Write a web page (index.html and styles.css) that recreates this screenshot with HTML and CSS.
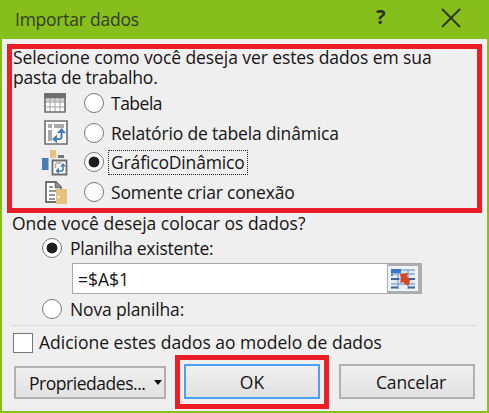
FILE: index.html
```html
<!DOCTYPE html>
<html lang="pt">
<head>
<meta charset="utf-8">
<title>Importar dados</title>
<link rel="stylesheet" href="styles.css">
</head>
<body>
<div class="dialog">
  <header class="titlebar">
    <span class="title">Importar dados</span>
    <span class="help">?</span>
    <svg class="close" width="20" height="20" viewBox="0 0 20 20"><path d="M1 1L19 19M19 1L1 19" stroke="#30381f" stroke-width="2" fill="none"/></svg>
  </header>
  <main class="body">
    <section class="view-options">
      <p class="intro"><span class="t-intro1">Selecione como você deseja ver estes dados em sua</span><span class="t-intro2">pasta de trabalho.</span></p>
      <div class="option">
        <svg class="icon" width="28" height="28" viewBox="0 0 28 28"><path d="M4 5h20v18H4z" fill="#fff"/><path d="M4 9h20v4H4z" fill="#d2d2d2"/><path d="M9 9v14M14 9v14M19 9v14M4 13h20M4 18h20" stroke="#a2a2a2" fill="none"/><path d="M4 5h20v18H4z" fill="none" stroke="#6d6d6d" stroke-width="1.6"/><path d="M3.2 4.2h21.6v5H3.2z" fill="#6d6d6d"/></svg>
        <span class="radio"></span><span class="label t-tabela">Tabela</span>
      </div>
      <div class="option">
        <svg class="icon" width="28" height="28" viewBox="0 0 28 28"><path d="M4 2h22v23H4z" fill="#fff" stroke="#6d6d6d" stroke-width="1.6"/><path d="M7 5h4v4H7zM13 5h10v4H13zM7 11h4v11H7z" fill="#a9a9a9"/><path d="M20.500 12v6q0 2-2 2H14" fill="none" stroke="#477eb8" stroke-width="2"/><path d="M16 14l4.500-5 4.500 5zM16 15.500v9L11 20z" fill="#477eb8"/></svg>
        <span class="radio"></span><span class="label t-relatorio">Relatório de tabela dinâmica</span>
      </div>
      <div class="option">
        <svg class="icon" width="28" height="28" viewBox="0 0 28 28"><path d="M9 2h6v8H9z" fill="#e9c17e"/><path d="M1 10h6.500v12H1z" fill="#477eb8"/><path d="M17 7h6v3h-6z" fill="#777"/><path d="M11.500 12.500h14v14h-14z" fill="#fff" stroke="#6d6d6d" stroke-width="1.800"/><path d="M14.500 20v-4l1-1h5" fill="none" stroke="#aaa" stroke-width="1.500"/><path d="M22 17v5l-1 1h-4" fill="none" stroke="#477eb8" stroke-width="1.600"/><path d="M19 18.500l3-3.500 3 3.500zM18 19.500v6.500l-3.500-3z" fill="#477eb8"/></svg>
        <span class="radio on"></span><span class="label focus t-grafico">GráficoDinâmico</span>
      </div>
      <div class="option">
        <svg class="icon" width="28" height="28" viewBox="0 0 28 28"><path d="M5 4h10l5 5v15H5z" fill="#fff" stroke="#6d6d6d" stroke-width="1.800"/><path d="M14.500 4v5.500H20" fill="#999" stroke="#6d6d6d" stroke-width="1.500"/><path d="M8 9h4M8 13h8M8 17h6M8 21h6" stroke="#777" stroke-width="1.600"/><path d="M15 11h11v15H15z" fill="#e9c17e"/><path d="M16.500 18h2v2h-2z" fill="#fff"/></svg>
        <span class="radio"></span><span class="label t-somente">Somente criar conexão</span>
      </div>
    </section>
    <section class="place">
      <p class="question"><span class="t-onde">Onde você deseja colocar os dados?</span></p>
      <div class="place-option"><span class="radio on"></span><span class="label t-planilha">Planilha existente:</span></div>
      <div class="field">
        <span class="value t-valor">=$A$1</span>
        <span class="picker"><svg width="24" height="20" viewBox="0 0 24 20"><path d="M0 0h24v20H0z" fill="#e3ebf5"/><path d="M0 0h10v4H2v3H0z" fill="#3975cb"/><path d="M10 1h14M0 5h24M0 10h24M0 15h24M7 4v16M17 0v20" stroke="#8ba8d0" stroke-width="1.500"/><path d="M0 10h8M0 18.500h7M18 10h6M17 18.500h7" stroke="#41659b" stroke-width="2"/><path d="M9 5l8-1-1 3 3 4-1 5h-3l-3-3-3 1 1-4z" fill="#d94427"/></svg></span>
      </div>
      <div class="place-option second"><span class="radio"></span><span class="label t-nova">Nova planilha:</span></div>
    </section>
    <div class="model"><span class="checkbox"></span><span class="t-adicione">Adicione estes dados ao modelo de dados</span></div>
    <footer class="actions">
      <div class="button props"><span class="t-prop">Propriedades...</span><i class="arrow"></i></div>
      <div class="highlight"><div class="button ok"><span class="t-ok">OK</span></div></div>
      <div class="button cancel"><span class="t-cancelar">Cancelar</span></div>
    </footer>
  </main>
</div>
</body>
</html>
```
FILE: styles.css
```css
* { box-sizing: border-box; }
body { margin: 0; font: 17.5px/20px "Open Sans", "Noto Sans", sans-serif; color: #171316; }
p { margin: 0; }
span { white-space: nowrap; }
.dialog { width: 489px; height: 413px; background: #86bf1c; padding: 0 2px 2px; }
.titlebar { height: 39px; display: flex; align-items: flex-start; padding: 9px 0 0 13px; color: #343c22; }
.title { width: 359px; letter-spacing: -.24px; }
.help { width: 67px; padding-left: 2px; font-weight: 700; font-size: 20px; margin-top: -2px; color: #282d20; }
.close { margin-top: -1px; }
.body { height: 372px; background: #efefef; padding-top: 5px; }
.view-options { margin-left: 5px; width: 475px; height: 169px; border: 5px solid #ee1c25; }
.intro { height: 41px; margin-top: -2px; padding-left: 1px; }
.intro span { display: block; height: 20px; }
.t-intro1 { letter-spacing: -.09px; }
.t-intro2 { letter-spacing: -.2px; }
.option { display: flex; align-items: center; height: 29.7px; padding-left: 29px; }
.icon { flex: none; }
.radio { flex: none; width: 20px; height: 20px; border: 1.5px solid #777; border-radius: 50%; background: #fff; }
.radio.on { background: radial-gradient(circle, #1e1e1e 0 5px, #fff 5.8px); }
.option .radio { margin-left: 15px; }
.option .label { margin-left: 7px; }
.t-tabela { letter-spacing: -.5px; }
.t-relatorio { letter-spacing: -.18px; }
.t-somente { letter-spacing: -.2px; }
.option .focus { margin-left: 4px; padding-left: 2px; width: 140px; height: 25px; line-height: 23px; border: 1px dotted #222; letter-spacing: -.15px; }
.place { height: 112px; }
.question { height: 25px; padding: 0 0 0 10px; }
.place-option { display: flex; height: 20px; align-items: center; padding-left: 40px; }
.place-option .label { margin-left: 8px; }
.t-planilha { letter-spacing: -.27px; }
.t-nova { letter-spacing: -.15px; }
.field { display: flex; justify-content: space-between; margin: 5px 0 5px 70px; width: 350px; height: 31px; border: 1px solid #a8a9ad; background: #fff; }
.value { padding: 5px 0 0 5px; }
.picker { width: 34px; height: 29px; border: solid #adaeb2; border-width: 2px 3px 2px 1px; background: #f2f3f5; display: flex; align-items: center; justify-content: center; }
.model { display: flex; align-items: center; margin-left: 10px; width: 464px; height: 36px; border-top: 1px solid #dadada; }
.model span:last-child { margin-top: -3px; }
.checkbox { width: 20px; height: 20px; border: 1px solid #777; background: #fff; margin: -2px 6px 0 1px; }
.actions { display: flex; padding-left: 12px; align-items: flex-start; }
.button { display: flex; align-items: center; justify-content: center; border: 2px solid #b0b0b0; background: linear-gradient(#f0f0f0, #e1e1e1); height: 35px; }
.props { width: 152px; height: 33px; margin-top: 5px; justify-content: flex-start; padding-left: 13px; }
.t-prop { letter-spacing: -.46px; }
.arrow { margin-left: 8px; border: 4px solid transparent; border-top: 5px solid #111; border-bottom: 0; }
.highlight { width: 154px; height: 54px; margin: -6px 0 0 9px; padding: 4px; border: 5px solid #ee1c25; }
.ok { width: 136px; border-color: #48a1fb; }
.cancel { width: 136px; margin: 3px 0 0 10px; padding-left: 8px; letter-spacing: -.1px; }
```
